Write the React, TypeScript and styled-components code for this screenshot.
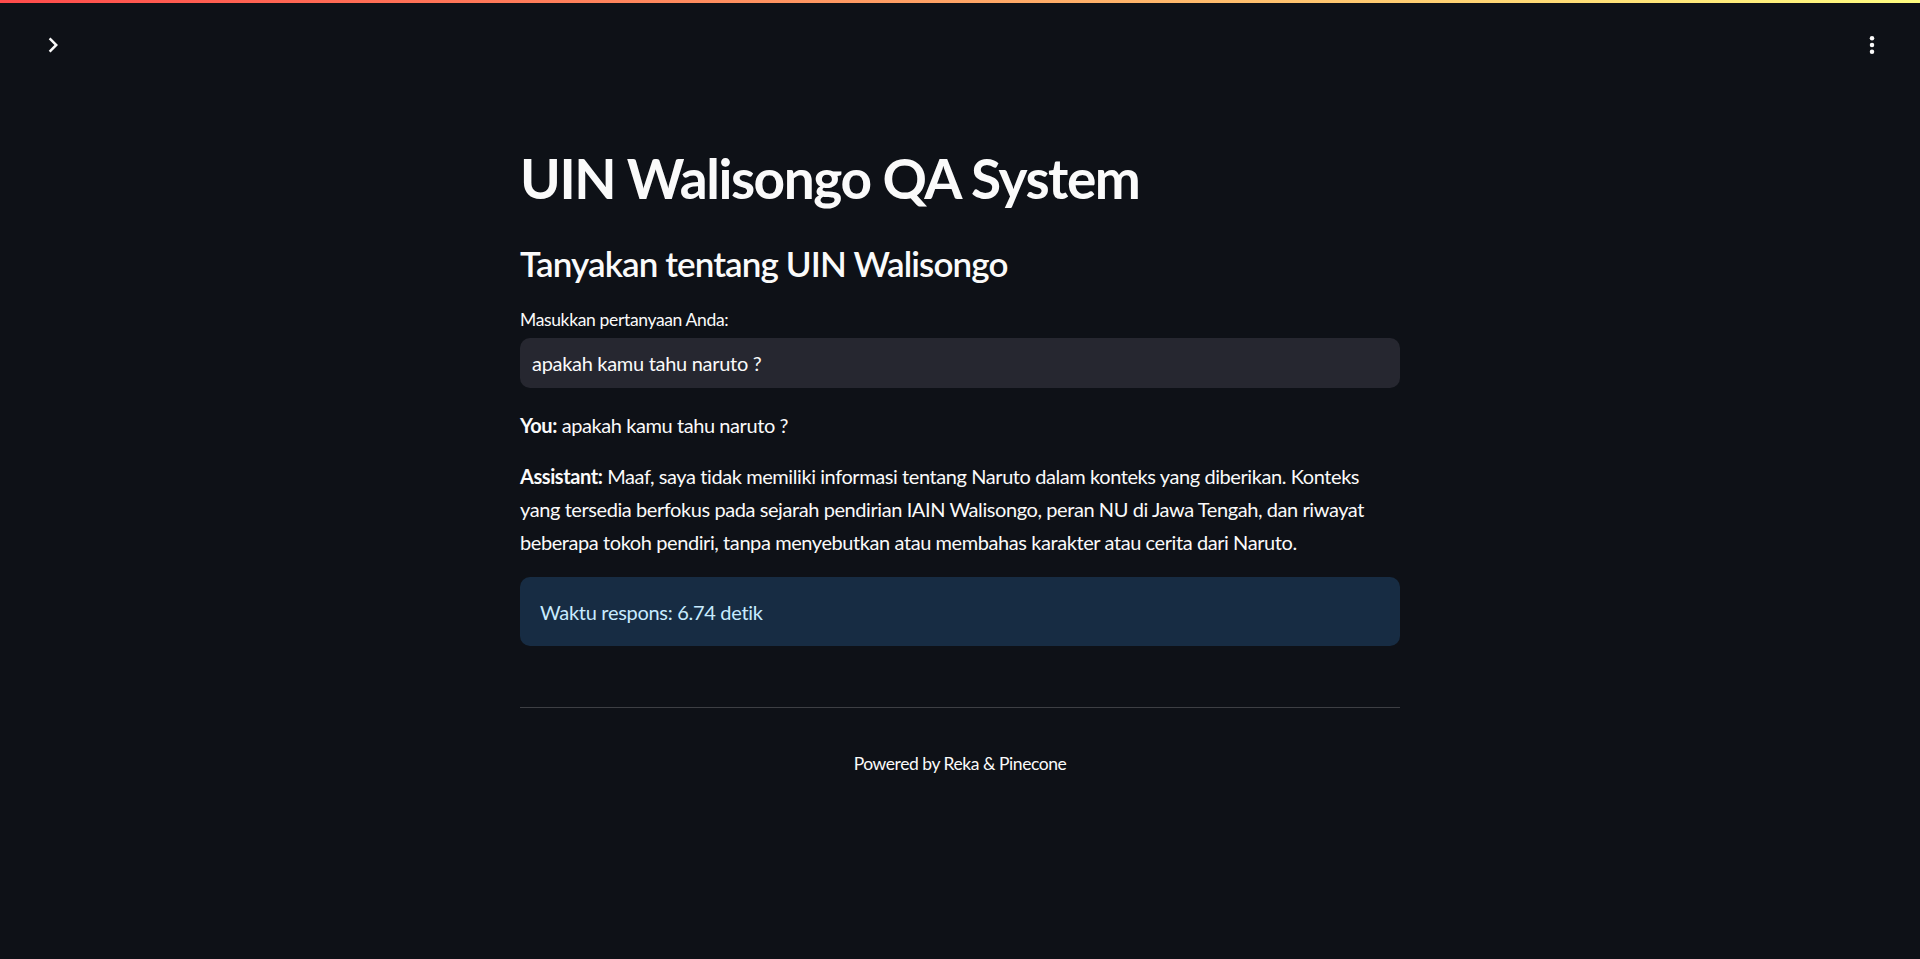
import React from "react";
import styled, { createGlobalStyle } from "styled-components";

const GlobalStyle = createGlobalStyle`
  html, body {
    margin: 0;
    padding: 0;
    background: #0e1117;
  }
  body {
    font-family: Lato, "Noto Sans", sans-serif;
    color: #fafafa;
    -webkit-font-smoothing: antialiased;
  }
  * { box-sizing: border-box; }
`;

const Page = styled.div`
  min-height: 959px;
  background: #0e1117;
  display: flex;
  flex-direction: column;
`;

const Decoration = styled.div`
  height: 3px;
  background: linear-gradient(90deg, #ff4b4b, #fffd80);
`;

const Header = styled.header`
  height: 83px;
  display: flex;
  align-items: center;
  justify-content: space-between;
  padding: 0 33px 0 38px;
`;

const IconButton = styled.button`
  width: 30px;
  height: 30px;
  padding: 0;
  border: none;
  background: transparent;
  color: #fafafa;
  display: flex;
  align-items: center;
  justify-content: center;
  cursor: pointer;
`;

const Main = styled.main`
  width: 880px;
  margin: 0 auto;
  padding-top: 59px;
  display: flex;
  flex-direction: column;
`;

const Title = styled.h1`
  margin: 0;
  font-size: 55px;
  line-height: 66px;
  font-weight: 700;
  letter-spacing: -1.45px;
`;

const Subheader = styled.h3`
  margin: 31px 0 0;
  font-size: 35px;
  line-height: 42px;
  font-weight: 600;
  letter-spacing: -0.9px;
`;

const Label = styled.label`
  margin-top: 22px;
  font-size: 17.5px;
  line-height: 28px;
  letter-spacing: -0.35px;
`;

const Input = styled.input`
  margin-top: 4px;
  height: 50px;
  width: 100%;
  border: none;
  outline: none;
  border-radius: 10px;
  background: #262730;
  color: #fafafa;
  font-family: inherit;
  font-size: 20px;
  letter-spacing: -0.3px;
  padding: 0 12px;
`;

const Paragraph = styled.p<{ $gap: number }>`
  margin: ${(p) => p.$gap}px 0 0;
  font-size: 20px;
  line-height: 33px;
  letter-spacing: -0.42px;
`;

const InfoBox = styled.div`
  margin-top: 18px;
  height: 69px;
  border-radius: 10px;
  background: rgba(61, 157, 243, 0.2);
  color: #c7ebff;
  font-size: 20px;
  line-height: 32px;
  letter-spacing: -0.3px;
  padding: 0 20px;
  display: flex;
  align-items: center;
`;

const Divider = styled.hr`
  margin: 61px 0 0;
  border: none;
  border-top: 1.25px solid rgba(250, 250, 250, 0.2);
  height: 0;
`;

const Footer = styled.div`
  margin-top: 42px;
  text-align: center;
  font-size: 17.5px;
  line-height: 28px;
  letter-spacing: -0.45px;
`;

export default function App() {
  return (
    <Page>
      <GlobalStyle />
      <Decoration />
      <Header>
        <IconButton aria-label="Expand sidebar">
          <svg width="30" height="30" viewBox="0 0 24 24" fill="currentColor">
            <path d="M10 6L8.59 7.41 13.17 12l-4.58 4.59L10 18l6-6z" />
          </svg>
        </IconButton>
        <IconButton aria-label="Main menu">
          <svg width="30" height="30" viewBox="0 0 24 24" fill="currentColor">
            <circle cx="12" cy="6.6" r="1.8" />
            <circle cx="12" cy="12" r="1.8" />
            <circle cx="12" cy="17.4" r="1.8" />
          </svg>
        </IconButton>
      </Header>
      <Main>
        <Title>UIN Walisongo QA System</Title>
        <Subheader>Tanyakan tentang UIN Walisongo</Subheader>
        <Label htmlFor="q">Masukkan pertanyaan Anda:</Label>
        <Input id="q" defaultValue="apakah kamu tahu naruto ?" />
        <Paragraph $gap={21}>
          <strong>You:</strong> apakah kamu tahu naruto ?
        </Paragraph>
        <Paragraph $gap={18}>
          <strong>Assistant:</strong> Maaf, saya tidak memiliki informasi tentang Naruto dalam konteks yang diberikan. Konteks
          <br />
          yang tersedia berfokus pada sejarah pendirian IAIN Walisongo, peran NU di Jawa Tengah, dan riwayat
          <br />
          beberapa tokoh pendiri, tanpa menyebutkan atau membahas karakter atau cerita dari Naruto.
        </Paragraph>
        <InfoBox>Waktu respons: 6.74 detik</InfoBox>
        <Divider />
        <Footer>Powered by Reka &amp; Pinecone</Footer>
      </Main>
    </Page>
  );
}
